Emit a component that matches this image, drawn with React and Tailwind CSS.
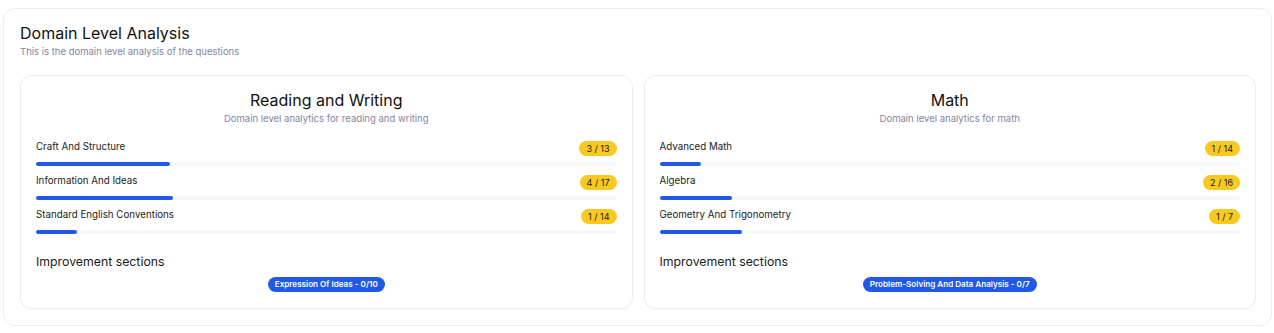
import React from "react";

const domains = [
  {
    title: "Reading and Writing",
    subtitle: "Domain level analytics for reading and writing",
    skills: [
      { name: "Craft And Structure", correct: 3, total: 13 },
      { name: "Information And Ideas", correct: 4, total: 17 },
      { name: "Standard English Conventions", correct: 1, total: 14 },
    ],
    improvements: ["Expression Of Ideas - 0/10"],
  },
  {
    title: "Math",
    subtitle: "Domain level analytics for math",
    skills: [
      { name: "Advanced Math", correct: 1, total: 14 },
      { name: "Algebra", correct: 2, total: 16 },
      { name: "Geometry And Trigonometry", correct: 1, total: 7 },
    ],
    improvements: ["Problem-Solving And Data Analysis - 0/7"],
  },
];

const DomainCard = ({ domain }) => (
  <div className="flex-1 rounded-xl border border-[#eceef3] bg-white px-[15px] pt-[13px] pb-4 shadow-[0_1px_2px_rgba(16,24,40,0.04)]">
    <div className="text-center">
      <h3 className="text-[16px] leading-[22px] text-[#111]">{domain.title}</h3>
      <p className="mt-[1px] text-[9.5px] leading-[14px] text-[#8385a3]">{domain.subtitle}</p>
    </div>

    <div className="mt-[15px] flex flex-col">
      {domain.skills.map((skill) => (
        <div key={skill.name} className="h-[34px]">
          <div className="flex items-start justify-between">
            <span className="mt-[-1px] text-[9.75px] leading-[14px] text-[#1a1a1a]">{skill.name}</span>
            <span className="rounded-full bg-[#f9c921] px-[7px] text-[9px] leading-[15px] text-[#1a1a1a]">
              {skill.correct} / {skill.total}
            </span>
          </div>
          <div className="mt-[6px] h-[4px] w-full rounded-full bg-[#f7f7fa]">
            <div
              className="h-[4px] rounded-full bg-[#2059e8]"
              style={{ width: `${(skill.correct / skill.total) * 100}%` }}
            ></div>
          </div>
        </div>
      ))}
    </div>

    <h4 className="mt-[10px] text-[12.3px] leading-[18px] text-[#1a1a1a]">Improvement sections</h4>
    <div className="mt-[6px] flex flex-wrap justify-center gap-2">
      {domain.improvements.map((item) => (
        <span
          key={item}
          className="rounded-full bg-[#2059e8] px-[7px] text-[8.1px] font-semibold leading-[15px] text-white"
        >
          {item}
        </span>
      ))}
    </div>
  </div>
);

const App = () => {
  return (
    <div className="min-h-screen bg-white pt-[8px] pl-[3px] pr-[2px] pb-[3px] font-['Inter',sans-serif]">
      <div className="rounded-xl border border-[#eceef3] bg-white pl-4 pr-[15px] pt-[12px] pb-4">
        <h2 className="text-[16px] leading-[24px] text-[#111]">Domain Level Analysis</h2>
        <p className="text-[9.5px] leading-[14px] text-[#8385a3]">
          This is the domain level analysis of the questions
        </p>

        <div className="mt-[16px] flex gap-[11px]">
          {domains.map((domain) => (
            <DomainCard key={domain.title} domain={domain} />
          ))}
        </div>
      </div>
    </div>
  );
};

export default App;
